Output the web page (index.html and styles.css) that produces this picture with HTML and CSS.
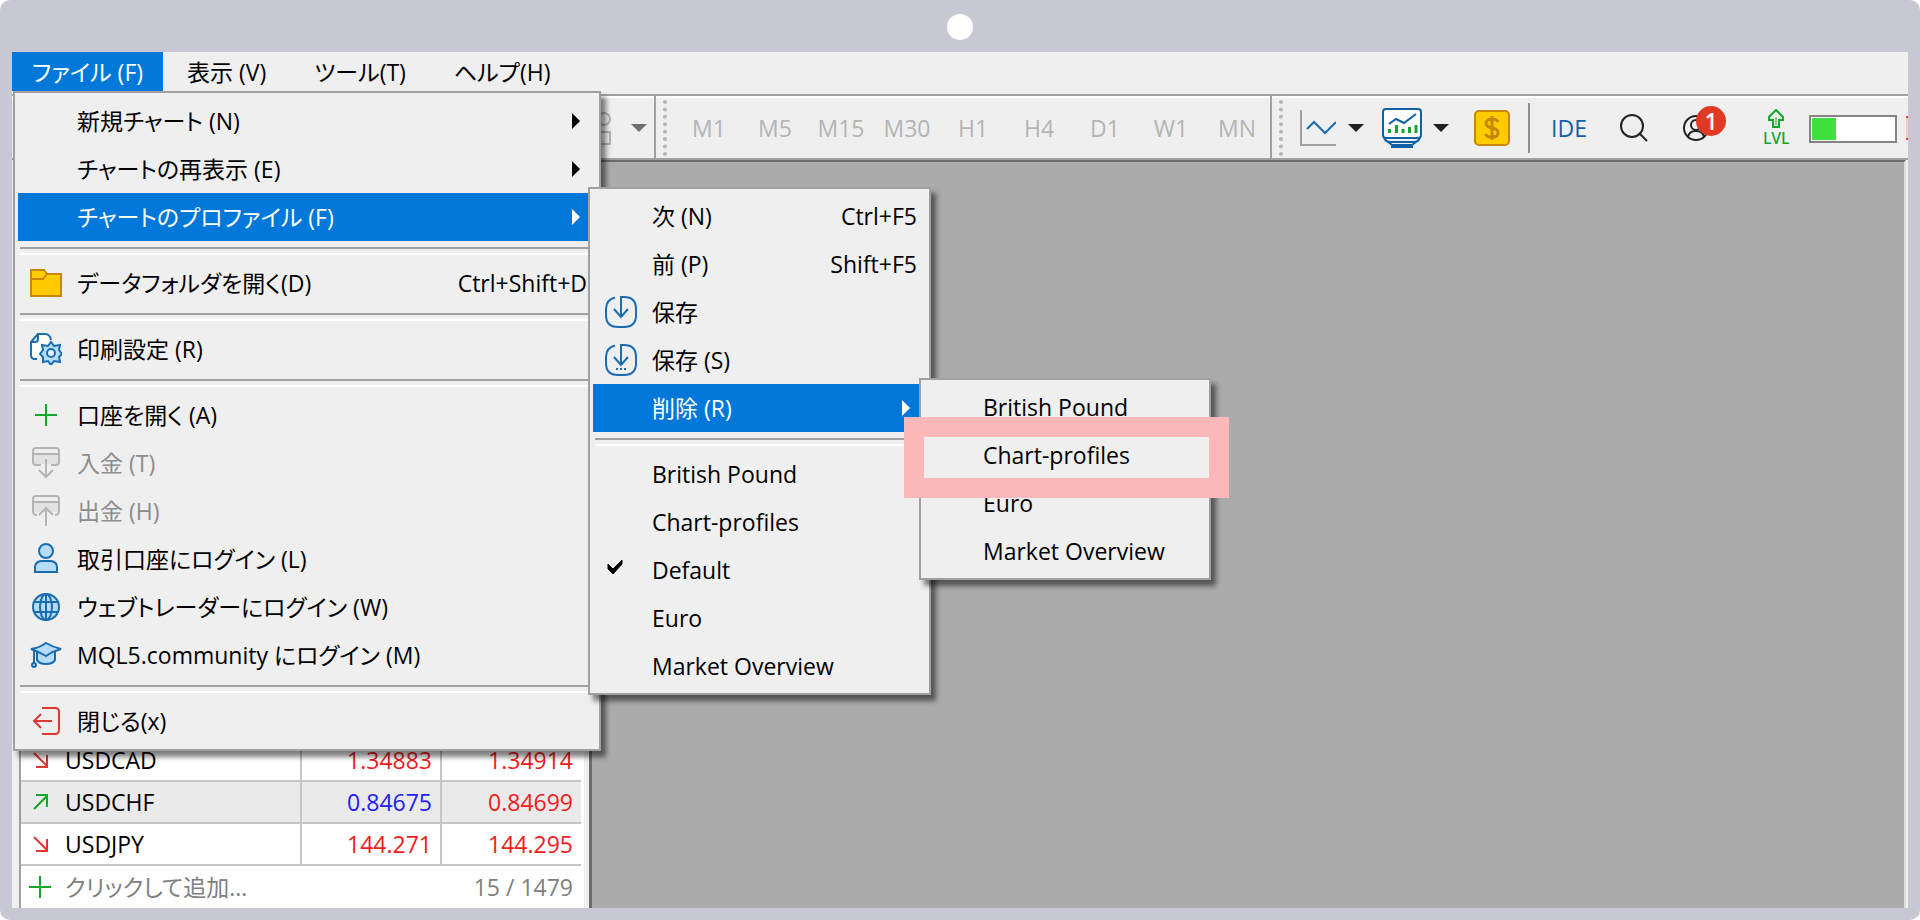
FILE: index.html
```html
<!DOCTYPE html>
<html lang="ja">
<head>
<meta charset="utf-8">
<title>MetaTrader 5</title>
<link rel="stylesheet" href="styles.css">
</head>
<body>
<div class="frame">
  <div class="camera-bar"><span class="camera"></span></div>
  <div class="app">
    <nav class="menubar">
      <div class="menubar-item">
        <button class="menubar-button open" type="button">ファイル (F)</button>
        <ul class="menu menu-file">
          <li><button class="item" type="button"><span class="label">新規チャート (N)</span><span class="arrow"></span></button></li>
          <li><button class="item" type="button"><span class="label">チャートの再表示 (E)</span><span class="arrow"></span></button></li>
          <li><button class="item active" type="button"><span class="label">チャートのプロファイル (F)</span><span class="arrow"></span></button>
            <ul class="menu menu-profiles">
              <li><button class="item" type="button"><span class="label">次 (N)</span><span class="keys">Ctrl+F5</span></button></li>
              <li><button class="item" type="button"><span class="label">前 (P)</span><span class="keys">Shift+F5</span></button></li>
              <li><button class="item" type="button"><svg class="icon" viewBox="0 0 32 32"><g fill="none" stroke="#1a6cb0" stroke-width="2"><path d="M10 1.500C4 3 1 7 1 13v6c0 8 4 12 12 12h6c8 0 12-4 12-12v-6C31 5 27 1 19 1h-3v19M9 13l7 8 7-8"/></g></svg><span class="label">保存</span></button></li>
              <li><button class="item" type="button"><svg class="icon" viewBox="0 0 32 32"><g fill="none" stroke="#1a6cb0" stroke-width="2"><path d="M10 1.500C4 3 1 7 1 13v6c0 8 4 12 12 12h6c8 0 12-4 12-12v-6C31 5 27 1 19 1h-3v19M9 13l7 8 7-8M11 25h2M15 25h2M19 25h2"/></g></svg><span class="label">保存 (S)</span></button></li>
              <li><button class="item active" type="button"><span class="label">削除 (R)</span><span class="arrow"></span></button>
                <ul class="menu menu-delete">
                  <li><button class="item" type="button"><span class="label">British Pound</span></button></li>
                  <li class="marked"><button class="item" type="button"><span class="label">Chart-profiles</span></button></li>
                  <li><button class="item" type="button"><span class="label">Euro</span></button></li>
                  <li><button class="item" type="button"><span class="label">Market Overview</span></button></li>
                </ul>
              </li>
              <li class="separator"></li>
              <li><button class="item" type="button"><span class="label">British Pound</span></button></li>
              <li><button class="item" type="button"><span class="label">Chart-profiles</span></button></li>
              <li><button class="item" type="button"><svg class="icon" viewBox="0 0 32 32"><path d="M3 10l5 5 9-9v4l-9 10-5-5z" fill="#000" stroke="#000"/></svg><span class="label">Default</span></button></li>
              <li><button class="item" type="button"><span class="label">Euro</span></button></li>
              <li><button class="item" type="button"><span class="label">Market Overview</span></button></li>
            </ul>
          </li>
          <li class="separator"></li>
          <li><button class="item" type="button"><svg class="icon" viewBox="0 0 32 32"><g fill="#fc0" stroke="#c8860a" stroke-width="2"><path d="M1 3h13l3 4h14v22H1z"/><path d="M1 12h12l4-5" fill="none"/></g></svg><span class="label">データフォルダを開く(D)</span><span class="keys">Ctrl+Shift+D</span></button></li>
          <li class="separator"></li>
          <li><button class="item" type="button"><svg class="icon" viewBox="0 0 32 32"><g fill="none" stroke="#1a6cb0" stroke-width="2"><path d="M7 26H5q-4 0-4-4V9l7-8h7q5 0 6 6" fill="#fff"/><path d="M1 9h4q3 0 3-3V1"/><path d="M21 9l3 4 6-1-1 5 3 4-3 3 1 5-6-1-3 4-3-4-5 1v-5l-3-3 3-4-1-5 6 1z" fill="#b5dcf8"/><circle cx="21" cy="20" r="4" fill="#e4f3ff"/></g></svg><span class="label">印刷設定 (R)</span></button></li>
          <li class="separator"></li>
          <li><button class="item" type="button"><svg class="icon" viewBox="0 0 32 32"><path d="M16 5v22M5 16h22" fill="none" stroke="#13a82c" stroke-width="2"/></svg><span class="label">口座を開く (A)</span></button></li>
          <li><button class="item disabled" type="button" disabled><svg class="icon" viewBox="0 0 32 32"><path d="M3 7h26v10H3z" fill="#e2e2e2"/><g fill="none" stroke="#b4b4b4" stroke-width="2"><path d="M11 18H6q-3 0-3-3V4q0-3 3-3h20q3 0 3 3v11q0 3-3 3h-5M3 7h26M16 12v18M9 23l7 7 7-7"/></g></svg><span class="label">入金 (T)</span></button></li>
          <li><button class="item disabled" type="button" disabled><svg class="icon" viewBox="0 0 32 32"><path d="M3 7h26v10H3z" fill="#e2e2e2"/><g fill="none" stroke="#b4b4b4" stroke-width="2"><path d="M7 20q-4 0-4-4V4q0-3 3-3h20q3 0 3 3v12q0 4-4 4M3 7h26M16 31V13M9 20l7-7 7 7"/></g></svg><span class="label">出金 (H)</span></button></li>
          <li><button class="item" type="button"><svg class="icon" viewBox="0 0 32 32"><g fill="#b5dcf8" stroke="#1a6cb0" stroke-width="2"><circle cx="16" cy="8" r="7"/><path d="M5 29v-5q0-5 6-6h10q6 1 6 6v5z"/></g></svg><span class="label">取引口座にログイン (L)</span></button></li>
          <li><button class="item" type="button"><svg class="icon" viewBox="0 0 32 32"><g fill="none" stroke="#1a6cb0" stroke-width="2"><circle cx="16" cy="16" r="13" fill="#b5dcf8"/><ellipse cx="16" cy="16" rx="6" ry="13"/><path d="M16 3v26M4 11h24M4 21h24"/></g></svg><span class="label">ウェブトレーダーにログイン (W)</span></button></li>
          <li><button class="item" type="button"><svg class="icon" viewBox="0 0 32 32"><g fill="#b5dcf8" stroke="#1a6cb0" stroke-width="2"><path d="M7 11v10q2 4 9 4t9-4V11"/><path d="M1 10q8-1 15-6 7 4 15 6-8 2-15 7-7-4-15-7z"/><path d="M4 11v14" fill="none"/><circle cx="4" cy="26" r="2"/></g></svg><span class="label">MQL5.community にログイン (M)</span></button></li>
          <li class="separator"></li>
          <li><button class="item" type="button"><svg class="icon" viewBox="0 0 32 32"><g fill="none" stroke="#e03830" stroke-width="2"><path d="M12 3h13q4 0 4 4v18q0 4-4 4H12M22 16H4M11 9l-7 7 7 7"/></g></svg><span class="label">閉じる(x)</span></button></li>
        </ul>
      </div>
      <button class="menubar-button" type="button">表示 (V)</button>
      <button class="menubar-button" type="button">ツール(T)</button>
      <button class="menubar-button" type="button">ヘルプ(H)</button>
    </nav>
    <div class="toolbar">
      <div class="tool-group group-objects">
        <button class="tool objects" type="button" aria-label="オブジェクト"><svg width="24" height="40" viewBox="0 0 24 40"><g fill="none" stroke="#b4b4b4" stroke-width="2"><circle cx="17" cy="11" r="6"/><rect x="11" y="24" width="12" height="12"/></g></svg></button>
        <span class="drop muted"></span>
      </div>
      <div class="tool-group group-periods">
        <span class="grip"></span>
        <button class="period" type="button">M1</button>
        <button class="period" type="button">M5</button>
        <button class="period" type="button">M15</button>
        <button class="period" type="button">M30</button>
        <button class="period" type="button">H1</button>
        <button class="period" type="button">H4</button>
        <button class="period" type="button">D1</button>
        <button class="period" type="button">W1</button>
        <button class="period" type="button">MN</button>
      </div>
      <div class="tool-group group-main">
        <span class="grip"></span>
        <button class="tool chart-type" type="button" aria-label="チャートの種類"><svg width="36" height="36" viewBox="0 0 36 36"><path d="M1 0v35h35" fill="none" stroke="#a0a0a0" stroke-width="2"/><path d="M7 19l7-7 11 11 11-11" fill="none" stroke="#1a6cb0" stroke-width="2"/></svg></button>
        <span class="drop"></span>
        <button class="tool indicators" type="button" aria-label="インディケータ"><svg width="40" height="40" viewBox="0 0 40 40"><g fill="none" stroke="#1060a8" stroke-width="2"><rect x="1" y="1" width="38" height="29" rx="3" fill="#fff"/><path d="M2 30q2 4 6 4h24q4 0 6-4M6 34l4 3h20l4-3M9 39h22"/><path d="M7 16l7-5 8 4 12-9"/></g><path d="M7.500 25v-4M14.500 25v-8M21 25v-4M27.500 25v-6M34 25v-8" stroke="#13a82c" stroke-width="3"/></svg></button>
        <span class="drop"></span>
        <button class="tool trade" type="button" aria-label="取引"><svg width="36" height="36" viewBox="0 0 36 36"><rect x="1" y="1" width="34" height="34" rx="4" fill="#fc0" stroke="#c8860a" stroke-width="2"/><path d="M24 12q-1-3-6-3t-6 4q0 4 6 5t6 5q0 4-6 4t-6-3M18 6v24" fill="none" stroke="#c8860a" stroke-width="3"/></svg></button>
        <span class="divider"></span>
        <button class="ide" type="button">IDE</button>
        <button class="tool search" type="button" aria-label="検索"><svg width="28" height="28" viewBox="0 0 28 28"><g fill="none" stroke="#222" stroke-width="2"><circle cx="12" cy="12" r="11"/><path d="M19 19l8 8"/></g></svg></button>
        <button class="tool account" type="button" aria-label="アカウント"><svg width="28" height="28" viewBox="0 0 28 28"><g fill="none" stroke="#222" stroke-width="2"><circle cx="14" cy="14" r="12"/><circle cx="14" cy="11" r="5"/><path d="M6 23q1-6 8-6t8 6"/></g></svg><span class="badge">1</span></button>
        <span class="level"><svg width="18" height="20" viewBox="0 0 18 20"><path d="M6 18v-7H2V8l7-7 7 7v3h-4v7z" fill="none" stroke="#13a82c" stroke-width="2"/><path d="M9 8v8" stroke="#13a82c" stroke-width="1"/></svg><span>LVL</span></span>
        <span class="progress"><span class="progress-fill" style="width: 30%"></span></span>
        <span class="cut-mark"></span>
      </div>
    </div>
    <div class="body">
      <aside class="market-watch">
        <table class="symbols">
          <tbody>
            <tr><td class="symbol"><span class="cell"><svg width="16" height="18" viewBox="0 0 16 18"><path d="M1 2l13 13M14 4v12H3" fill="none" stroke="#e03830" stroke-width="2"/></svg>USDCAD</span></td><td class="price down">1.34883</td><td class="price down">1.34914</td></tr>
            <tr class="alt"><td class="symbol"><span class="cell"><svg width="16" height="18" viewBox="0 0 16 18"><path d="M1 16L14 3M3 2h11v12" fill="none" stroke="#13a82c" stroke-width="2"/></svg>USDCHF</span></td><td class="price up">0.84675</td><td class="price down">0.84699</td></tr>
            <tr><td class="symbol"><span class="cell"><svg width="16" height="18" viewBox="0 0 16 18"><path d="M1 2l13 13M14 4v12H3" fill="none" stroke="#e03830" stroke-width="2"/></svg>USDJPY</span></td><td class="price down">144.271</td><td class="price down">144.295</td></tr>
          </tbody>
        </table>
        <div class="add-row">
          <button class="add" type="button"><svg width="22" height="22" viewBox="0 0 22 22"><path d="M11 0v22M0 11h22" stroke="#13a82c" stroke-width="2"/></svg>クリックして追加...</button>
          <span class="count">15 / 1479</span>
        </div>
      </aside>
      <main class="workspace"></main>
    </div>
  </div>
</div>
</body>
</html>
```
FILE: styles.css
```css
* {
  box-sizing: border-box;
}

body {
  margin: 0;
  background: #fff;
  color: #000;
  font: 23px/32px "Open Sans", "Noto Sans CJK JP", sans-serif;
  font-feature-settings: "palt";
}

button {
  margin: 0;
  padding: 0;
  border: 0;
  background: none;
  color: inherit;
  font: inherit;
  font-feature-settings: inherit;
  white-space: nowrap;
}

svg {
  display: block;
  flex: none;
}

.frame {
  display: flex;
  flex-direction: column;
  min-height: 100vh;
  padding: 0 12px 12px;
  border-radius: 10px;
  background: #c8c8d4;
  overflow: hidden;
}

.camera-bar {
  display: flex;
  align-items: center;
  justify-content: center;
  height: 52px;
  padding-top: 2px;
}

.camera {
  width: 26px;
  height: 26px;
  border-radius: 50%;
  background: #fff;
}

.app {
  display: flex;
  flex: 1;
  flex-direction: column;
  background: #efefef;
}

/* Menu bar and cascading menus */

.menubar {
  display: flex;
  height: 42px;
}

.menubar-item {
  position: relative;
}

.menubar-button {
  height: 39px;
  padding: 0 24px;
}

.menubar-button.open {
  padding: 0 20px;
  background: #0078d9;
  color: #fff;
}

.menu {
  position: absolute;
  z-index: 2;
  margin: 0;
  padding: 3px;
  border: 2px solid #a0a0a0;
  background: #efefef;
  box-shadow: 5px 6px 5px rgba(0, 0, 0, 0.5);
  list-style: none;
}

.menu li {
  position: relative;
}

.menu-file {
  top: 39px;
  left: 1px;
  width: 588px;
  padding: 4px 3px;
}

.menu-profiles {
  top: -6px;
  left: calc(100% - 8px);
  width: 343px;
}

.menu-delete {
  top: -6px;
  left: calc(100% - 7px);
  width: 292px;
}

.item {
  display: grid;
  grid-template-columns: 47px 1fr auto;
  align-items: center;
  width: 100%;
  height: 48px;
  padding: 0 9px 0 12px;
  text-align: left;
}

.item.active {
  background: #0078d9;
  color: #fff;
}

.item.disabled {
  color: #8c8c8c;
}

.icon {
  width: 32px;
  height: 32px;
  grid-column: 1;
}

.label {
  grid-column: 2;
}

.keys,
.arrow {
  grid-column: 3;
}

.arrow {
  margin-right: 7px;
  border: 8px solid transparent;
  border-right: 0;
  border-left-color: currentColor;
}

.separator {
  height: 18px;
  padding: 6px 2px 0;
}

.separator::before {
  content: "";
  display: block;
  height: 4px;
  border-top: 2px solid #a0a0a0;
  border-bottom: 2px solid #fff;
}

.marked::after {
  content: "";
  position: absolute;
  inset: -14px -23px -19px -20px;
  z-index: 3;
  border: 20px solid #ffb8ba;
}

/* Toolbar */

.toolbar {
  display: flex;
  height: 66px;
  border-top: 2px solid #a0a0a0;
  border-bottom: 2px solid #a0a0a0;
  box-shadow: inset 0 2px #fff;
}

.tool-group {
  display: flex;
  align-items: center;
  padding-top: 2px;
}

.group-objects {
  width: 644px;
  justify-content: flex-end;
  gap: 20px;
  padding-right: 7px;
  border-right: 2px solid #a0a0a0;
}

.group-periods {
  gap: 6px;
  padding: 2px 3px 0 5px;
  border-right: 2px solid #a0a0a0;
}

.group-periods .grip {
  margin-right: 6px;
}

.group-main {
  flex: 1;
  padding-left: 5px;
}

.grip {
  width: 6px;
  height: 56px;
  border-right: 4px dotted #b4b4b4;
}

.period {
  width: 60px;
  color: #b4b4b4;
}

.drop {
  border: 8px solid transparent;
  border-bottom: 0;
  border-top-color: #222;
}

.drop.muted {
  border-top-color: #6e6e6e;
}

.chart-type {
  margin: 0 12px 0 17px;
}

.indicators {
  margin: 0 11px 0 18px;
}

.trade {
  margin: 0 18px 0 25px;
}

.divider {
  width: 2px;
  height: 50px;
  background: #909090;
}

.ide {
  width: 78px;
  margin-right: 12px;
  color: #1060a8;
}

.account {
  position: relative;
  margin-left: 34px;
}

.badge {
  position: absolute;
  top: -8px;
  left: 14px;
  width: 30px;
  height: 30px;
  border-radius: 50%;
  background: #e03a22;
  color: #fff;
  font-weight: 600;
  line-height: 30px;
}

.level {
  display: flex;
  flex-direction: column;
  align-items: center;
  margin-left: 53px;
  color: #13a82c;
  font: 500 16px/18px "Noto Sans", sans-serif;
}

.progress {
  width: 88px;
  height: 28px;
  margin: 2px 9px 0 19px;
  padding: 1px;
  border: 2px solid #848484;
  background: #fff;
}

.progress-fill {
  display: block;
  height: 100%;
  background: #40e040;
}

.cut-mark {
  width: 2px;
  height: 24px;
  margin-left: auto;
  border: 2px solid #e03830;
  border-width: 2px 0;
  background: #f8caca;
}

/* Market watch and chart area */

.body {
  display: flex;
  flex: 1;
}

.market-watch {
  display: flex;
  flex-direction: column;
  justify-content: flex-end;
  width: 570px;
  margin-left: 7px;
  padding-right: 8px;
  border-left: 2px solid #a0a0a0;
  background: linear-gradient(to left, #efefef 5px, #fff 5px);
}

.symbols {
  width: 100%;
  border-collapse: collapse;
  table-layout: fixed;
}

.symbols td {
  height: 42px;
  padding: 0;
  border-bottom: 2px solid #c6c6c6;
}

.symbols td + td {
  width: 140px;
  padding-right: 8px;
  border-left: 2px solid #c6c6c6;
}

.alt {
  background: #eaeaea;
}

.cell {
  display: flex;
  align-items: center;
  gap: 16px;
  padding-left: 12px;
}

.price {
  text-align: right;
}

.down {
  color: #f21c1c;
}

.up {
  color: #2020f8;
}

.add-row {
  display: flex;
  align-items: center;
  justify-content: space-between;
  height: 42px;
  padding: 0 8px;
  color: #808080;
}

.add {
  display: flex;
  align-items: center;
  gap: 14px;
}

.workspace {
  flex: 1;
  margin-right: 2px;
  border-top: 2px solid #6c6c6c;
  border-right: 2px solid #dedede;
  border-left: 3px solid #6c6c6c;
  background: #ababab;
}
```
